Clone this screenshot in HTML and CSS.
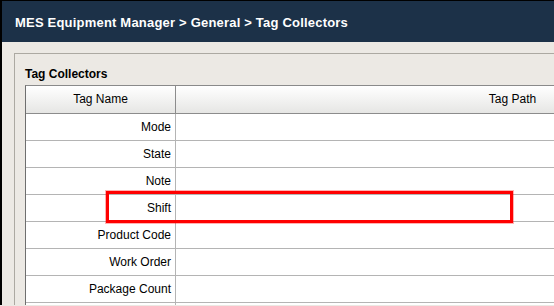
FILE: index.html
```html
<!DOCTYPE html>
<html lang="en">
<head>
    <meta charset="UTF-8">
    <title>MES Equipment Manager - Tag Collectors</title>
    <link rel="stylesheet" href="styles.css">
</head>
<body>
    <div class="window">
        <!-- Breadcrumb header -->
        <div class="titlebar">MES Equipment Manager &gt; General &gt; Tag Collectors</div>

        <div class="content">
            <div class="panel">
                <div class="panel-title">Tag Collectors</div>
                <div class="grid">
                    <div class="row head">
                        <div class="cell name">Tag Name</div>
                        <div class="cell path">Tag Path</div>
                    </div>
                    <div class="row"><div class="cell name">Mode</div><div class="cell path"></div></div>
                    <div class="row"><div class="cell name">State</div><div class="cell path"></div></div>
                    <div class="row"><div class="cell name">Note</div><div class="cell path"></div></div>
                    <div class="row"><div class="cell name">Shift</div><div class="cell path"></div></div>
                    <div class="row"><div class="cell name">Product Code</div><div class="cell path"></div></div>
                    <div class="row"><div class="cell name">Work Order</div><div class="cell path"></div></div>
                    <div class="row"><div class="cell name">Package Count</div><div class="cell path"></div></div>
                    <div class="row"><div class="cell name"></div><div class="cell path"></div></div>
                </div>
            </div>
        </div>
    </div>

    <!-- Highlight box drawn over the Shift row -->
    <div class="highlight"></div>
</body>
</html>
```

FILE: styles.css
```css
/* Global */
body {
    margin: 0;
    position: relative;
    overflow: hidden;
    height: 306px;
    background: #ece9e4;
    font-family: "Liberation Sans", Arial, sans-serif;
}

.window {
    border-top: 1px solid #000;
    border-left: 2px solid #000;
    height: 305px;
    box-sizing: border-box;
    overflow: hidden;
}

/* Dark breadcrumb bar */
.titlebar {
    height: 41px;
    background: #1c3148;
    color: #fff;
    font-weight: bold;
    font-size: 13px;
    letter-spacing: 0.2px;
    line-height: 43px;
    padding-left: 13px;
    white-space: nowrap;
}

.content {
    padding: 11px 0 0 12px;
}

/* Panel */
.panel {
    border-top: 1px solid #aca9a2;
    border-left: 1px solid #aca9a2;
    padding: 13px 0 0 10px;
}

.panel-title {
    font-weight: bold;
    font-size: 12px;
    line-height: 14px;
    color: #000;
    margin-bottom: 4px;
}

/* Table */
.grid {
    width: 823px;
    border-top: 1px solid #8a8a8a;
    border-left: 1px solid #6f6f6f;
    background: #fff;
}

.row {
    display: flex;
    height: 26px;
    border-bottom: 1px solid #b4b4b4;
}

.cell {
    font-size: 12px;
    line-height: 26px;
    color: #000;
    white-space: nowrap;
}

.cell.name {
    width: 150px;
    border-right: 1px solid #b4b4b4;
    text-align: right;
    padding-right: 4px;
    box-sizing: border-box;
}

.cell.path {
    flex: 1;
}

.row.head {
    height: 27px;
    background: linear-gradient(#ffffff, #e6e6e4);
    border-bottom: 1px solid #8c8c8c;
}

.row.head .cell {
    text-align: center;
    line-height: 27px;
    padding: 0;
}

.row.head .cell.name {
    border-right: 1px solid #8c8c8c;
}

/* Red annotation box */
.highlight {
    position: absolute;
    left: 106px;
    top: 191px;
    width: 401px;
    height: 26px;
    border: 3px solid #ff0000;
    box-shadow: 0 0 0 1px rgba(255, 0, 0, 0.3);
}
```
